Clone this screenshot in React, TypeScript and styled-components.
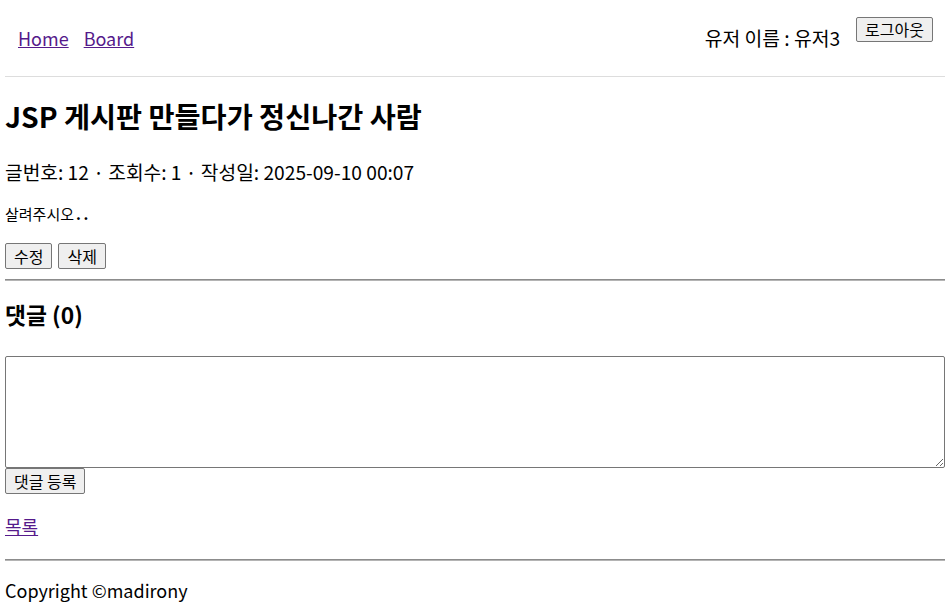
import styled, { createGlobalStyle } from "styled-components";

const GlobalStyle = createGlobalStyle`
  body {
    margin: 0;
    background: #ffffff;
    color: #000000;
    font-family: "Noto Sans CJK KR", "Noto Sans", sans-serif;
  }
`;

const Page = styled.div`
  padding: 0 6px 0 5px;
`;

const Header = styled.header`
  display: flex;
  justify-content: space-between;
  align-items: flex-start;
  height: 59px;
  padding: 17px 12px 0 13px;
  border-bottom: 1px solid #dddddd;
`;

const Nav = styled.nav`
  display: flex;
  gap: 15px;
  padding-top: 8px;
  line-height: 26px;
`;

const Link = styled.a`
  color: #551a8b;
  text-decoration: underline;
  font-size: 18px;
  line-height: 26px;
  cursor: pointer;
`;

const UserBox = styled.div`
  display: flex;
  align-items: flex-start;
  gap: 16px;
`;

const UserName = styled.span`
  padding-top: 8px;
  font-size: 19.3px;
  line-height: 26px;
`;

const Button = styled.button`
  font-family: "Noto Sans CJK KR", "Noto Sans", sans-serif;
  font-size: 16px;
  line-height: 20px;
  padding: 2px 8px;
  color: #000000;
  background: #efefef;
  border: 1px solid #767676;
  border-radius: 2px;
`;

const SmallButton = styled(Button)`
  line-height: 19px;
`;

const Title = styled.h2`
  margin: 22px 0 0;
  font-size: 28.3px;
  line-height: 34px;
  font-weight: 700;
`;

const Meta = styled.p`
  margin: 26px 0 0;
  font-size: 19.2px;
  line-height: 26px;
`;

const Content = styled.div`
  margin-top: 18px;
  font-size: 15px;
  line-height: 22px;
`;

const Dots = styled.span`
  font-weight: 700;
  letter-spacing: 2.5px;
  margin-left: 2px;
`;

const Actions = styled.div`
  display: flex;
  gap: 6px;
  margin-top: 18px;
`;

const Rule = styled.hr`
  margin: 10px 0 0;
  border: none;
  border-top: 1px solid #8c8c8c;
  border-bottom: 1px solid #b4b4b4;
`;

const CommentTitle = styled.h3`
  margin: 19px 0 0;
  font-size: 22.8px;
  line-height: 30px;
  font-weight: 700;
`;

const CommentForm = styled.form`
  display: flex;
  flex-direction: column;
  align-items: flex-start;
  margin-top: 26px;
`;

const TextArea = styled.textarea`
  display: block;
  width: 100%;
  height: 112px;
  margin: 0;
  box-sizing: border-box;
  border: 1px solid #767676;
  border-radius: 2px;
  font-family: "Noto Sans CJK KR", "Noto Sans", sans-serif;
`;

const ListLink = styled.div`
  margin-top: 19px;
  line-height: 26px;
`;

const FooterRule = styled(Rule)`
  margin-top: 19px;
`;

const Footer = styled.footer`
  margin-top: 16px;
  font-size: 18px;
  line-height: 26px;
`;

export default function App() {
  return (
    <>
      <GlobalStyle />
      <Page>
        <Header>
          <Nav>
            <Link>Home</Link>
            <Link>Board</Link>
          </Nav>
          <UserBox>
            <UserName>유저 이름 : 유저3</UserName>
            <SmallButton>로그아웃</SmallButton>
          </UserBox>
        </Header>
        <Title>JSP 게시판 만들다가 정신나간 사람</Title>
        <Meta>글번호: 12 · 조회수: 1 · 작성일: 2025-09-10 00:07</Meta>
        <Content>
          살려주시오<Dots>..</Dots>
        </Content>
        <Actions>
          <Button>수정</Button>
          <Button>삭제</Button>
        </Actions>
        <Rule />
        <CommentTitle>댓글 (0)</CommentTitle>
        <CommentForm>
          <TextArea />
          <Button type="button">댓글 등록</Button>
        </CommentForm>
        <ListLink>
          <Link>목록</Link>
        </ListLink>
        <FooterRule />
        <Footer>Copyright ©madirony</Footer>
      </Page>
    </>
  );
}
